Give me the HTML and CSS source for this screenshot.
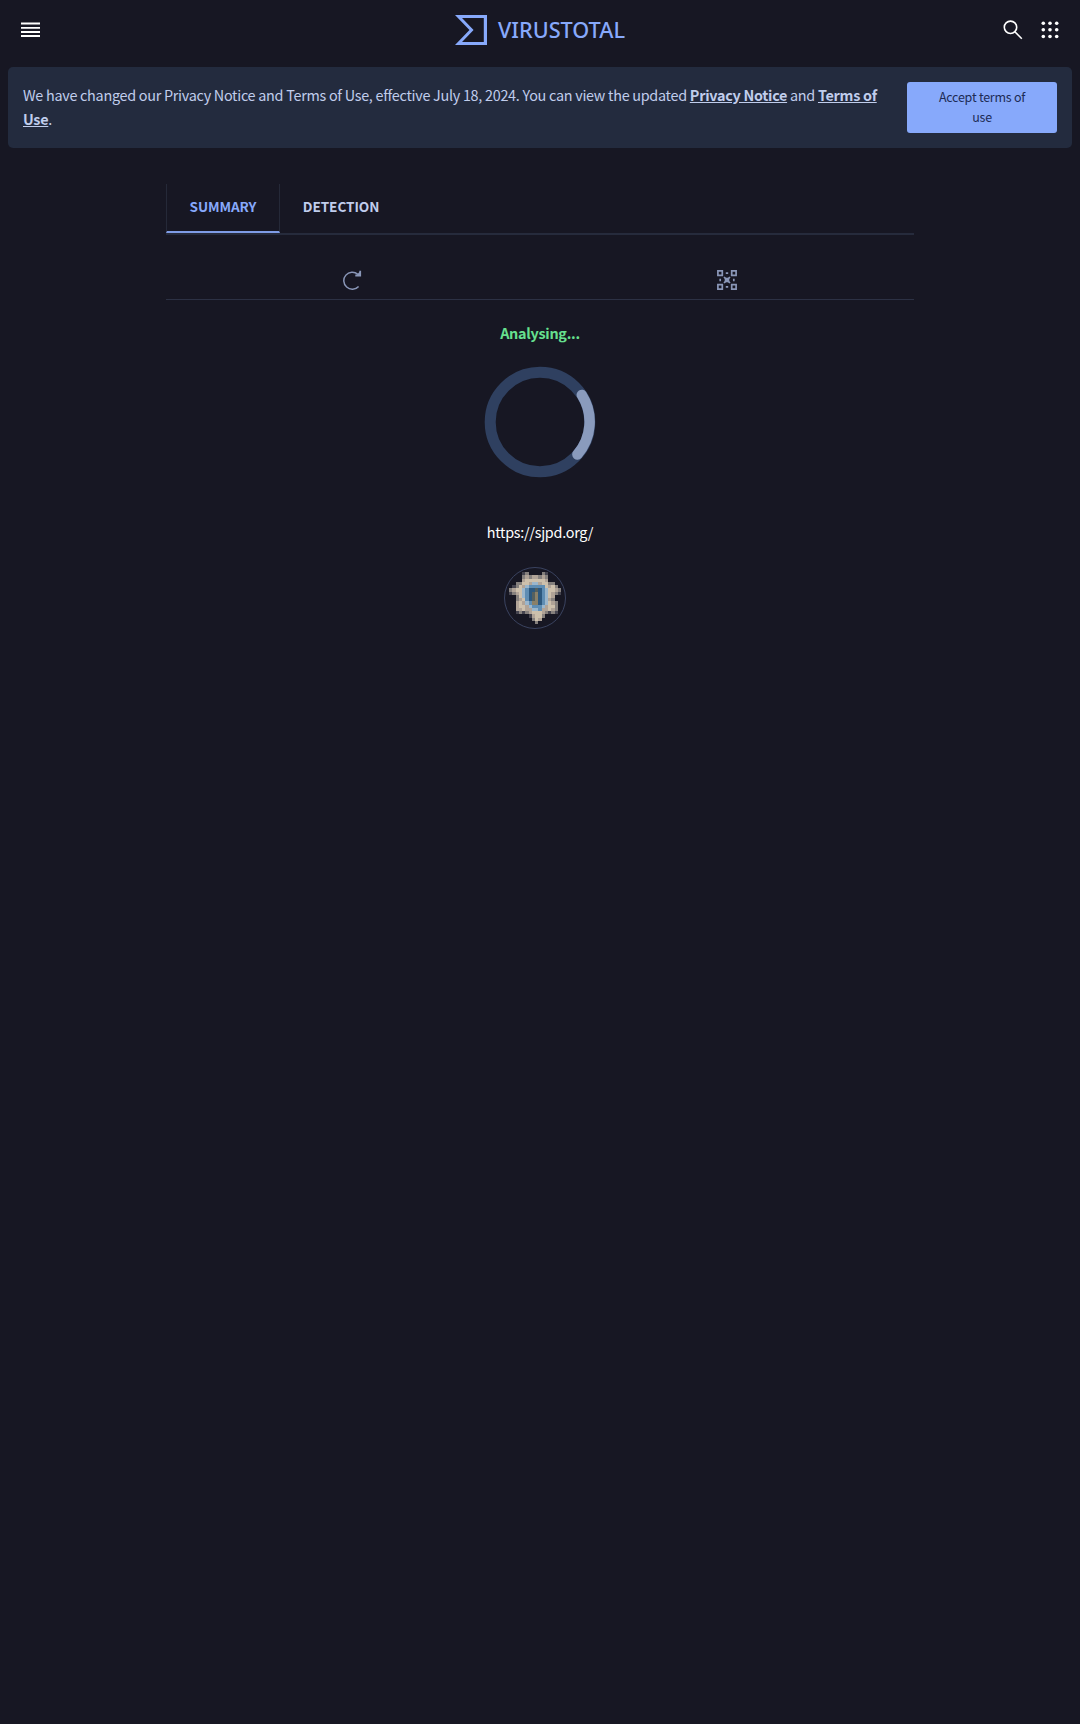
FILE: index.html
```html
<!DOCTYPE html>
<html lang="en">
<head>
    <meta charset="UTF-8">
    <meta name="viewport" content="width=device-width, initial-scale=1.0">
    <title>VirusTotal</title>
    <link rel="stylesheet" href="styles.css">
</head>
<body>
    <!-- Top bar -->
    <header class="top-bar">
        <button class="icon-btn menu-btn" aria-label="Menu">
            <svg width="19" height="16" viewBox="0 0 19 16" fill="#fff">
                <path d="M0 .5h19v1.9H0zM0 4.9h19v1.9H0zM0 9h19v1.9H0zM0 13h19v1.9H0z"/>
            </svg>
        </button>
        <a href="#" class="logo">
            <svg width="32" height="30" viewBox="0 0 100 89" preserveAspectRatio="none" fill="#87a9fb">
                <path d="M45.3 44.5 0 89h100V0H0zM90 80H22l36-35.2L22 9h68z"/>
            </svg>
            <svg class="wordmark" width="128" height="30" viewBox="0 0 128 30">
                <text x="1" y="22.5" textLength="127" lengthAdjust="spacingAndGlyphs">VIRUSTOTAL</text>
            </svg>
        </a>
        <div class="top-actions">
            <button class="icon-btn" aria-label="Search">
                <svg width="20" height="20" viewBox="0 0 20 20" fill="none" stroke="#fff" stroke-width="1.6">
                    <circle cx="7.5" cy="7.3" r="6.2"/>
                    <path d="m11.8 11.7 7 7"/>
                </svg>
            </button>
            <button class="icon-btn" aria-label="Apps">
                <svg width="18" height="18" viewBox="0 0 18 18" fill="#fff">
                    <circle cx="2.3" cy="2.2" r="1.8"/><circle cx="9" cy="2.2" r="1.8"/><circle cx="15.7" cy="2.2" r="1.8"/>
                    <circle cx="2.3" cy="8.8" r="1.8"/><circle cx="9" cy="8.8" r="1.8"/><circle cx="15.7" cy="8.8" r="1.8"/>
                    <circle cx="2.3" cy="15.5" r="1.8"/><circle cx="9" cy="15.5" r="1.8"/><circle cx="15.7" cy="15.5" r="1.8"/>
                </svg>
            </button>
        </div>
    </header>

    <!-- Terms notice -->
    <div class="notice">
        <p>We have changed our Privacy Notice and Terms of Use, effective July 18, 2024. You can view the updated <a href="#">Privacy Notice</a> and <a href="#">Terms of Use</a>.</p>
        <button class="accept-btn">Accept terms of use</button>
    </div>

    <!-- Main Content -->
    <main>
        <nav class="tabs">
            <a href="#" class="tab active">SUMMARY</a>
            <a href="#" class="tab">DETECTION</a>
        </nav>
        <div class="tools">
            <button class="icon-btn" aria-label="Reanalyze">
                <svg width="22" height="20" viewBox="0 0 22 20" fill="none" stroke="#8a97b8" stroke-width="1.5">
                    <path d="M16.6 16.4A8.5 8.5 0 1 1 15.8 4.2"/>
                    <path d="M18.2.8v4.7h-4.9" stroke-width="1.8"/>
                    <path d="M18 1.5v4h-4z" fill="#8a97b8" stroke="none"/>
                </svg>
            </button>
            <button class="icon-btn" aria-label="Graph">
                <svg width="20" height="20" viewBox="0 0 20 20" fill="none" stroke="#8a97b8" stroke-width="1.7">
                    <path d="M.9.9h4.4v4.4H.9zM14.7.9h4.4v4.4h-4.4zM.9 14.7h4.4v4.4H.9zM14.7 14.7h4.4v4.4h-4.4z"/>
                    <path d="M7 7l6 6M13 7l-6 6M8.8 3.2h2.4M8.8 16.8h2.4M3.2 8.8v2.4M16.8 8.8v2.4"/>
                    <path d="M7.7 7.7h4.6v4.6H7.7z" fill="#8a97b8" stroke="none"/>
                </svg>
            </button>
        </div>
        <section class="report">
            <div class="status">Analysing...</div>
            <svg class="spinner" width="112" height="112" viewBox="0 0 112 112" fill="none" stroke-width="11">
                <circle cx="56" cy="56" r="49.8" stroke="#2f4060"/>
                <path d="M97.8 29A49.8 49.8 0 0 1 93.4 88.5" stroke="#8a9bbd" stroke-width="10.5" stroke-linecap="round"/>
            </svg>
            <div class="url">https://sjpd.org/</div>
            <div class="favicon">
                <svg id="badge" width="52" height="52" viewBox="0 0 16 16" shape-rendering="crispEdges"></svg>
            </div>
        </section>
    </main>
    <script src="badge.js"></script>
</body>
</html>
```
FILE: styles.css
```css
body {
    margin: 0;
    min-height: 100vh;
    background-color: #171723;
    color: #fff;
    font-family: "Noto Sans CJK SC", "Noto Sans", sans-serif;
    font-size: 14.4px;
    letter-spacing: -0.28px;
}
a {
    text-decoration: none;
}
.icon-btn {
    display: flex;
    padding: 0;
    border: none;
    background: none;
    cursor: pointer;
}
.top-bar {
    height: 60px;
    padding: 0 20px;
    display: grid;
    grid-template-columns: 1fr auto 1fr;
    align-items: center;
}
.menu-btn {
    margin-left: 1px;
}
.logo {
    display: flex;
    align-items: center;
    gap: 10px;
    margin-right: 1px;
}
.wordmark {
    overflow: visible;
}
.wordmark text {
    font-family: "Noto Sans", sans-serif;
    font-size: 21px;
    font-weight: 500;
    letter-spacing: 0;
    fill: #87a9fb;
}
.top-actions {
    display: flex;
    justify-content: flex-end;
    align-items: center;
    gap: 18px;
    margin-right: 1px;
}
.notice {
    margin: 7px 8px 0;
    padding: 0 15px;
    height: 81px;
    border-radius: 5px;
    background-color: #232b3e;
    display: flex;
    align-items: center;
    justify-content: space-between;
}
.notice p {
    width: 865px;
    margin: 0 0 1px;
    line-height: 24px;
    color: #c0cdec;
}
.notice a {
    color: #c0cdec;
    font-weight: bold;
    text-decoration: underline;
}
.accept-btn {
    width: 150px;
    height: 51px;
    padding: 0 24px 2px;
    border: none;
    border-radius: 3px;
    background-color: #87a9fb;
    color: #1d2b55;
    font-family: inherit;
    font-size: 12.5px;
    letter-spacing: -0.25px;
    line-height: 20px;
}
main {
    width: 748px;
    margin: 36px auto 0;
}
.tabs {
    display: flex;
    height: 49px;
    border-bottom: 2px solid #262b3c;
}
.tab {
    padding: 0 23px;
    line-height: 45px;
    font-size: 13.6px;
    font-weight: bold;
    letter-spacing: -0.1px;
    color: #c0cdec;
}
.tab.active {
    padding: 0 22.5px;
    border-left: 1px solid #252938;
    border-right: 1px solid #252938;
    border-bottom: 2px solid #7f9ce6;
    color: #87a9fb;
}
.tools {
    display: grid;
    grid-template-columns: 1fr 1fr;
    justify-items: center;
    align-items: start;
    margin-top: 35px;
    height: 29px;
    border-bottom: 1.5px solid #2c3144;
}
.report {
    display: flex;
    flex-direction: column;
    align-items: center;
}
.status {
    margin-top: 21px;
    line-height: 24px;
    font-weight: bold;
    color: #66e08f;
}
.spinner {
    margin-top: 21px;
}
.url {
    margin-top: 42px;
    line-height: 24px;
}
.favicon {
    width: 60px;
    height: 60px;
    margin: 23px 11px 0 0;
    border: 1px solid #3a4360;
    border-radius: 50%;
    display: flex;
    align-items: center;
    justify-content: center;
}
```
FILE: badge.js
```js
// one letter per pixel of the 16x16 site icon
const colors = {
    w: '#cdc0ac', b: '#b0a397', g: '#85807d', d: '#45444f',
    c: '#9bb6cc', s: '#5f8db3', n: '#2d587e', k: '#55605f', m: '#8a8068'
};
const rows = [
    '....dg....gd....',
    '....gbgbbgbg....',
    '....bwwwwwwb....',
    '..ggwwbccbwwgg..',
    '.dgwbcssssswbwg.',
    'gbwwcsnnknscwwbg',
    'dgbwcsnkmnscwbgd',
    '..gwcsnkmnscwb..',
    '..gbwsnkmnscbg..',
    '..bwbcsmmnscwbg.',
    '..bwwbcssscbwwg.',
    '..bbwbbccsbbwbg.',
    '..dgdgbwwwbgdgd.',
    '......dbwwg.....',
    '.......gwb......',
    '........g.......'
];
let rects = '';
rows.forEach((row, y) => {
    [...row].forEach((p, x) => {
        if (p !== '.') {
            rects += `<rect x="${x}" y="${y}" width="1" height="1" fill="${colors[p]}"/>`;
        }
    });
});
document.getElementById('badge').innerHTML = rects;
```
